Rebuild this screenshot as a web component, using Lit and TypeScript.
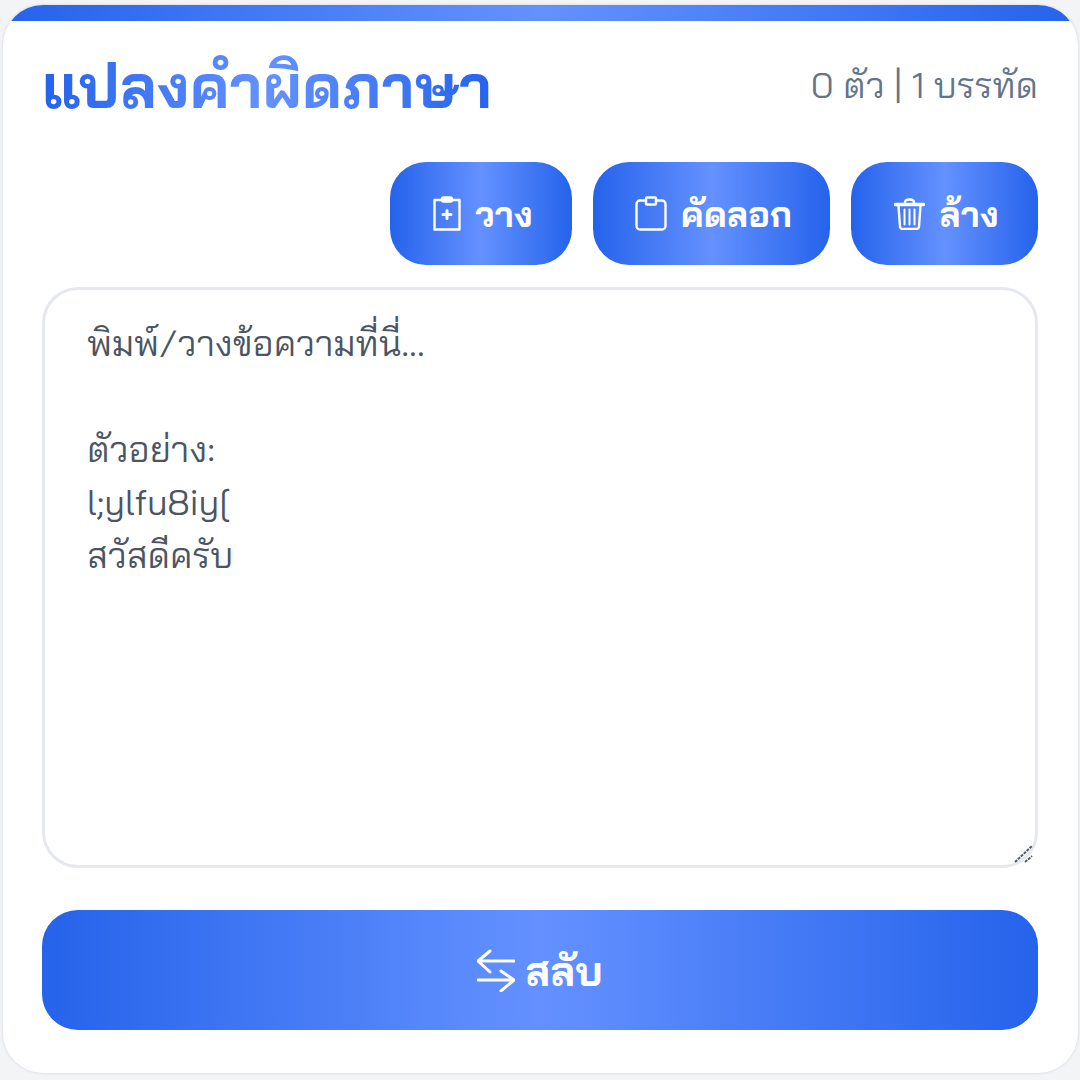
import { LitElement, html, css } from "lit";
import { customElement } from "lit/decorators.js";

@customElement("app-root")
export class AppRoot extends LitElement {
  static styles = css`
    :host {
      display: block;
      width: 1080px;
      height: 1080px;
      box-sizing: border-box;
      padding: 5px 2px 7px 3px;
      background: #f3f4f6;
      font-family: "Bai Jamjuree", "Noto Sans", sans-serif;
    }
    .card {
      height: 100%;
      box-sizing: border-box;
      background: #fff;
      border-radius: 40px;
      overflow: hidden;
      display: flex;
      flex-direction: column;
      box-shadow: 0 0 3px rgba(100, 116, 139, 0.25);
    }
    .bar {
      height: 16px;
      flex: none;
      background: linear-gradient(90deg, #2563eb, #6491ff 50%, #2563eb);
    }
    .body {
      flex: 1;
      display: flex;
      flex-direction: column;
      padding: 0 40px 0 39px;
    }
    .head {
      height: 141px;
      flex: none;
      display: flex;
      justify-content: space-between;
      align-items: flex-start;
    }
    h1 {
      margin: 26px 0 0;
      font-size: 60.800px;
      line-height: 76px;
      font-weight: 700;
      background: linear-gradient(90deg, #2563eb, #6491ff 50%, #2563eb);
      -webkit-background-clip: text;
      background-clip: text;
      color: transparent;
    }
    .stats {
      margin-top: 39px;
      font-size: 35.600px;
      line-height: 50px;
      font-weight: 400;
      color: #64748b;
    }
    .tools {
      display: flex;
      justify-content: flex-end;
      gap: 21px;
      flex: none;
    }
    button {
      border: none;
      color: #fff;
      font-family: inherit;
      font-weight: 700;
      background: linear-gradient(90deg, #2563eb, #6491ff 50%, #2563eb);
      display: flex;
      align-items: center;
      justify-content: center;
      padding: 0;
    }
    .tool {
      height: 103px;
      box-sizing: border-box;
      padding-left: 4px;
      border-radius: 36px;
      font-size: 35px;
      gap: 14px;
    }
    .paste { width: 182px; }
    .copy { width: 237px; }
    .clear { width: 187px; }
    .field {
      position: relative;
      flex: none;
      margin-top: 22px;
      height: 581px;
    }
    textarea {
      display: block;
      width: 100%;
      height: 100%;
      box-sizing: border-box;
      border: 3.500px solid #e6e8ef;
      border-radius: 36px;
      padding: 26px 42px;
      font-family: inherit;
      font-size: 35.600px;
      line-height: 53px;
      outline: none;
      resize: none;
      background: #fff;
    }
    textarea::placeholder {
      color: #4b5563;
      opacity: 1;
    }
    .grip {
      position: absolute;
      right: 4px;
      bottom: 5px;
      stroke: #555b66;
      stroke-width: 2;
      stroke-dasharray: 3 1;
      stroke-linecap: butt;
      pointer-events: none;
    }
    .swap {
      margin-top: 42px;
      height: 120px;
      flex: none;
      border-radius: 36px;
      font-size: 40.800px;
      gap: 10px;
    }
    svg {
      display: block;
      flex: none;
      fill: none;
      stroke: currentColor;
      stroke-width: 2.400;
      stroke-linecap: round;
      stroke-linejoin: round;
    }
  `;

  render() {
    return html`
      <div class="card">
        <div class="bar"></div>
        <div class="body">
          <div class="head">
            <h1>แปลงคำผิดภาษา</h1>
            <div class="stats">0 ตัว | 1 บรรทัด</div>
          </div>
          <div class="tools">
            <button class="tool paste">
              <svg width="28" height="35" viewBox="0 0 28 35">
                <path d="M9 4H1.500V33.500H26.500V4H19" />
                <rect x="9" y="1.500" width="10" height="4" rx="1.500" fill="currentColor" />
                <path d="M14 14.500v8M10 18.500h8" stroke-width="3" />
              </svg>
              วาง
            </button>
            <button class="tool copy">
              <svg width="32" height="35" viewBox="0 0 32 35">
                <path d="M11 4.500H5A3.500 3.500 0 0 0 1.500 8v22A3.500 3.500 0 0 0 5 33.500h22a3.500 3.500 0 0 0 3.500-3.500V8A3.500 3.500 0 0 0 27 4.500H21" />
                <rect x="11" y="1.500" width="10" height="7" rx="1" />
              </svg>
              คัดลอก
            </button>
            <button class="tool clear">
              <svg width="31" height="32" viewBox="0 0 31 32">
                <path d="M1.500 6.500h28" stroke-width="3.500" />
                <path d="M11 4.500C11 2.500 12.500 1.500 15.500 1.500S20 2.500 20 4.500" />
                <path d="M4.500 8l1.500 20.500a2.500 2.500 0 0 0 2.500 2.500h14a2.500 2.500 0 0 0 2.500-2.500L26.500 8" />
                <path d="M10.500 11.500v15M15.500 11.500v15M20.500 11.500v15" stroke-width="2" />
              </svg>
              ล้าง
            </button>
          </div>
          <div class="field">
            <textarea
              placeholder=${"พิมพ์/วางข้อความที่นี่...\n\nตัวอย่าง:\nl;ylfu8iy[\nสวัสดีครับ"}
            ></textarea>
            <svg class="grip" width="20" height="18" viewBox="0 0 20 18">
              <path d="M1 17L18 1M11 17L18 11" />
            </svg>
          </div>
          <button class="swap">
            <svg width="38" height="43" viewBox="1 0 38 43">
              <path d="M2 12H38M14 2L2 12L14 23" stroke-width="3" />
              <path d="M2 31H38M25 22L38 31L25 42" stroke-width="3" />
            </svg>
            สลับ
          </button>
        </div>
      </div>
    `;
  }
}
